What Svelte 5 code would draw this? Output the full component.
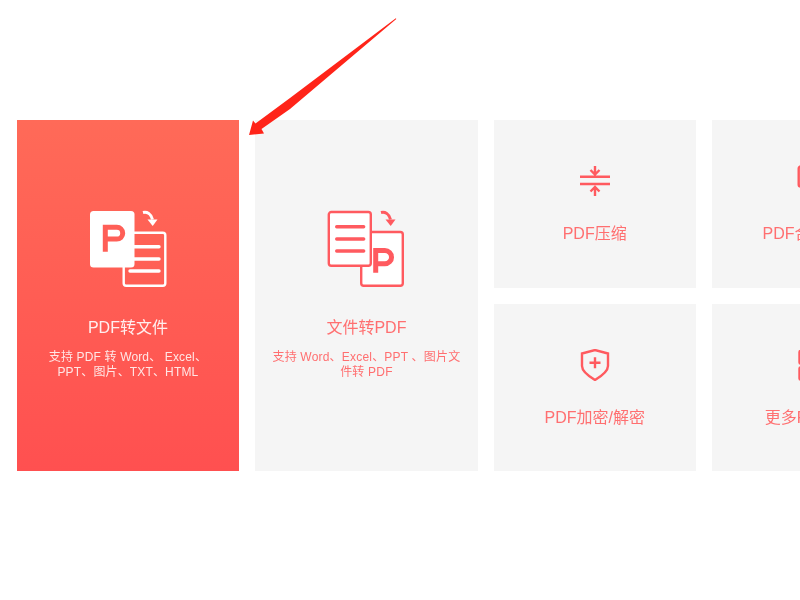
<script>
  const small = [
    { title: 'PDF压缩', icon: 'compress' },
    { title: 'PDF合并/拆分', icon: 'merge' },
    { title: 'PDF加密/解密', icon: 'shield' },
    { title: '更多PDF工具', icon: 'more' }
  ];
</script>

<div class="page">
  <div class="grid">
    <div class="card big active">
      <svg class="doc" width="78" height="78" viewBox="0 0 78 78">
        <path class="arrow-w" d="M54 2.500c4-1 8 1 9.500 7" />
        <path class="head-w" d="M58.500 9.500h10l-4.800 6.500z" />
        <rect class="sheet-w" x="34.700" y="22.700" width="41.600" height="53" rx="2.500" />
        <path class="lines-w" d="M41 36.700h29M41 49h29M41 61h29" />
        <rect class="solid-w" x="1" y="1" width="44.500" height="56.500" rx="3.500" />
        <path class="p-red" d="M16.300 41.700V17.300H27.800a5.900 5.900 0 0 1 0 11.800H16.300" />
      </svg>
      <h3>PDF转文件</h3>
      <p>支持 PDF 转 Word、 Excel、<br />PPT、图片、TXT、HTML</p>
    </div>

    <div class="card big">
      <svg class="doc" width="78" height="78" viewBox="0 0 78 78">
        <path class="arrow-r" d="M54 2.500c4-1 8 1 9.500 7" />
        <path class="head-r" d="M58.500 9.500h10l-4.800 6.500z" />
        <rect class="sheet-r" x="34.200" y="22" width="41.600" height="53.700" rx="2.500" />
        <rect class="sheet-r" x="1.800" y="2" width="42" height="53.700" rx="2.500" />
        <path class="lines-r" d="M9.700 16.700h27M9.700 29h27M9.700 41h27" />
        <path class="p-solid" d="M48.700 62.700V40.500H57.900a6.650 6.650 0 0 1 0 13.300H48.700" />
      </svg>
      <h3>文件转PDF</h3>
      <p>支持 Word、Excel、PPT 、图片文<br />件转 PDF</p>
    </div>

    {#each small as item}
      <div class="card">
        <svg class="tool" width="32" height="32" viewBox="0 0 32 32">
          {#if item.icon === 'compress'}
            <path d="M1 11.700h30M1 19h30M16 1v8.500M11.500 5l4.500 4.500 4.500-4.500M16 31v-9M11.500 26.500l4.500-4.500 4.500 4.500" />
          {:else if item.icon === 'merge'}
            <rect x="1.700" y="1.500" width="20" height="20" rx="2" />
          {:else if item.icon === 'shield'}
            <path d="M16 1L29 4.500V17C29 23 21 28 16 31 11 28 3 23 3 17V4.500ZM16 8.300v11M10.500 13.800h11" />
          {:else}
            <rect x="2.500" y="2" width="11" height="12.500" rx="1" />
            <rect x="2.500" y="18.500" width="11" height="12" rx="1" />
          {/if}
        </svg>
        <h3>{item.title}</h3>
      </div>
    {/each}
  </div>

  <svg class="pointer" width="160" height="125" viewBox="0 0 160 125">
    <path d="M147.800 0.200L148.300 1L42 91L13.500 111L16 115.500L1 117L5 102.500L7.500 105.500L42 80Z" />
  </svg>
</div>

<style>
  :global(body) {
    margin: 0;
    background: #fff;
    overflow: hidden;
  }

  .page {
    position: relative;
    width: 800px;
    height: 600px;
    overflow: hidden;
    font-family: "Liberation Sans", "Noto Sans CJK SC", sans-serif;
  }

  .grid {
    display: grid;
    grid-template-columns: 222.500px 222.500px 202px 202px;
    grid-template-rows: 167.500px 167.500px;
    gap: 16px;
    padding: 120px 0 0 16.700px;
    width: 900px;
    filter: blur(0.5px);
  }

  .card {
    display: flex;
    flex-direction: column;
    align-items: center;
    background: #f5f5f5;
    color: #ff6f70;
    text-align: center;
  }

  .card.big {
    grid-row: span 2;
  }

  .card.active {
    background: linear-gradient(180deg, #ff6a58, #ff5050);
    color: #fff;
  }

  .card h3 {
    margin: 0;
    font-size: 16px;
    font-weight: 400;
    line-height: 22px;
  }

  .card.active h3 {
    opacity: 0.9;
  }

  .card p {
    margin: 11px 0 0;
    font-size: 12px;
    line-height: 15px;
    letter-spacing: 0.2px;
    white-space: nowrap;
  }

  .card.active p {
    opacity: 0.85;
    letter-spacing: 0.15px;
  }

  .doc {
    margin: 90px 0 29px;
  }

  .tool {
    margin: 45px 0 26px;
    fill: none;
    stroke: #ff5a5f;
    stroke-width: 2.400;
  }

  .arrow-w, .lines-w, .sheet-w {
    fill: none;
    stroke: #fff;
    stroke-width: 2.400;
  }

  .arrow-w, .arrow-r {
    stroke-width: 3;
  }

  .head-w {
    fill: #fff;
  }

  .head-r {
    fill: #ff5a5f;
  }

  .lines-w, .lines-r {
    stroke-width: 3.400;
    stroke-linecap: round;
  }

  .solid-w {
    fill: #fff;
  }

  .p-red {
    fill: none;
    stroke: #ff5f57;
    stroke-width: 5;
  }

  .arrow-r, .lines-r, .sheet-r {
    fill: none;
    stroke: #ff5a5f;
  }

  .sheet-r {
    fill: #fff;
    stroke-width: 2.400;
  }

  .p-solid {
    fill: none;
    stroke: #ff5a5f;
    stroke-width: 5;
  }

  .pointer {
    position: absolute;
    left: 248px;
    top: 18px;
    fill: #ff2419;
  }
</style>
